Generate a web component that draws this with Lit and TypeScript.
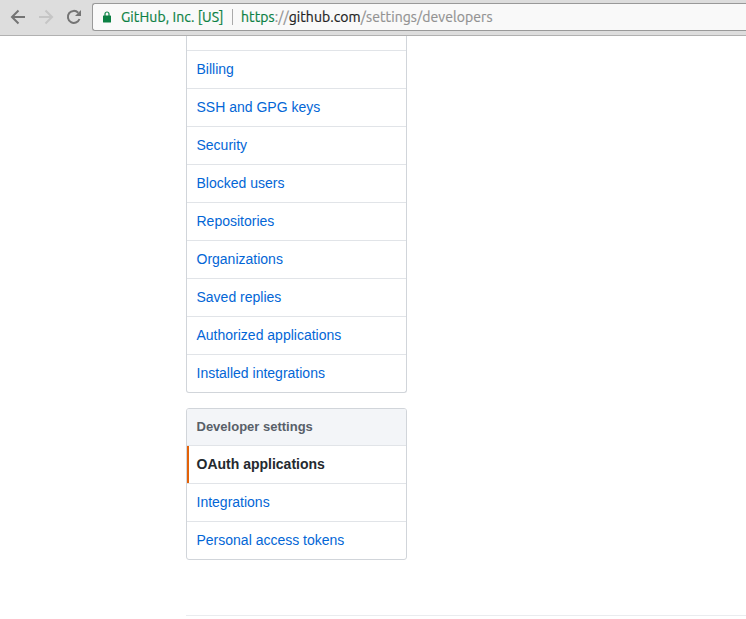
import { LitElement, html, css } from "lit";
import { customElement, property } from "lit/decorators.js";

@customElement("browser-bar")
class BrowserBar extends LitElement {
  static styles = css`
    :host { display: flex; box-sizing: border-box; height: 36px; background: #ddd; border-bottom: 1px solid #b1b1b1; }
    .nav { width: 92px; flex: none; display: flex; gap: 12px; padding: 9px 0 0 10px; box-sizing: border-box; }
    svg { display: block; flex: none; }
    .omnibox { flex: 1; min-width: 0; height: 28px; box-sizing: border-box; margin-top: 3px; border: 1px solid #999;
      border-right: 0; border-radius: 3px 0 0 3px; background: #f9f9f9; display: flex; align-items: center;
      padding-left: 10px; font: 14px/26px Ubuntu, "Noto Sans", sans-serif; white-space: pre; color: #222; }
    .owner { color: #0b8043; margin-left: 10px; width: 103px; letter-spacing: 0.09px; -webkit-text-stroke: 0.2px; }
    .rule { width: 1px; height: 16px; background: #aaa; margin: 0 8px 0 8px; }
    .url { letter-spacing: 0.09px; -webkit-text-stroke: 0.2px; }
    .scheme { color: #0b8043; }
    .dim { color: #929292; }
  `;
  render() {
    return html`
      <div class="nav">
        <svg width="16" height="16" viewBox="0 0 16 16" fill="none" stroke="#747474" stroke-width="2"><path d="M15 8H2.5M8.5 1.5L2 8l6.500 6.500"/></svg>
        <svg width="16" height="16" viewBox="0 0 16 16" fill="none" stroke="#c5c5c5" stroke-width="2"><path d="M1 8h12.500M7.500 1.500L14 8l-6.500 6.500"/></svg>
        <svg width="16" height="16" viewBox="0 0 16 16"><path d="M13.500 10A6 6 0 1 1 12.200 3.700" fill="none" stroke="#747474" stroke-width="2"/><path d="M15 1v6H9z" fill="#747474"/></svg>
      </div>
      <div class="omnibox">
        <svg width="8" height="12" viewBox="0 0 8 12"><path d="M2 6V3a2 2 0 0 1 4 0v3" fill="none" stroke="#0b8043" stroke-width="1.200"/><rect y="4.500" width="8" height="7" rx=".6" fill="#0b8043"/></svg>
        <span class="owner">GitHub, Inc. [US]</span><span class="rule"></span>
        <span class="url"><span class="scheme">https</span><span class="dim">://</span>github.com<span class="dim">/settings/developers</span></span>
      </div>`;
  }
}

@customElement("settings-menu")
class SettingsMenu extends LitElement {
  @property() heading = "";
  @property() selected = "";
  @property({ attribute: false }) items: string[] = [];
  @property({ type: Boolean, reflect: true }) continued = false;
  static styles = css`
    :host { display: block; box-sizing: border-box; width: 221px; border: 1px solid #d1d5da; border-radius: 3px;
      overflow: hidden; font: 14px/21px "Liberation Sans", Arial, sans-serif; background: #fff; }
    :host([continued]) { border-top: 0; border-radius: 0 0 3px 3px; }
    .remainder { height: 14px; border-bottom: 1px solid #e1e4e8; }
    .heading { height: 36px; line-height: 35px; padding-left: 9.500px; background: #f3f5f8; color: #586069;
      font-size: 13px; font-weight: bold; border-bottom: 1px solid #e1e4e8; }
    .item { display: block; box-sizing: border-box; height: 38px; line-height: 37px; padding-left: 9.500px;
      color: #0366d6; text-decoration: none; border-bottom: 1px solid #e1e4e8; }
    .item:last-child { height: 37px; border-bottom: 0; }
    .selected { font-weight: bold; color: #24292e;
      background: linear-gradient(#e36209, #e36209) 0 0 / 2px 100% no-repeat; }
  `;
  render() {
    return html`
      ${this.continued ? html`<div class="remainder"></div>` : ""}
      ${this.heading ? html`<div class="heading">${this.heading}</div>` : ""}
      ${this.items.map((t) => html`<a class="item ${t === this.selected ? "selected" : ""}">${t}</a>`)}`;
  }
}

@customElement("app-root")
class AppRoot extends LitElement {
  static styles = css`
    :host { display: block; height: 619px; overflow: hidden; background: #fff; }
    .page { display: flex; flex-direction: column; gap: 15px; padding-left: 186px; }
    .footer { margin-top: 40px; border-top: 1px solid #eaecef; }
  `;
  render() {
    return html`
      <browser-bar></browser-bar>
      <div class="page">
        <settings-menu continued .items=${["Billing", "SSH and GPG keys", "Security", "Blocked users", "Repositories",
          "Organizations", "Saved replies", "Authorized applications", "Installed integrations"]}></settings-menu>
        <settings-menu heading="Developer settings" selected="OAuth applications"
          .items=${["OAuth applications", "Integrations", "Personal access tokens"]}></settings-menu>
        <div class="footer"></div>
      </div>`;
  }
}
